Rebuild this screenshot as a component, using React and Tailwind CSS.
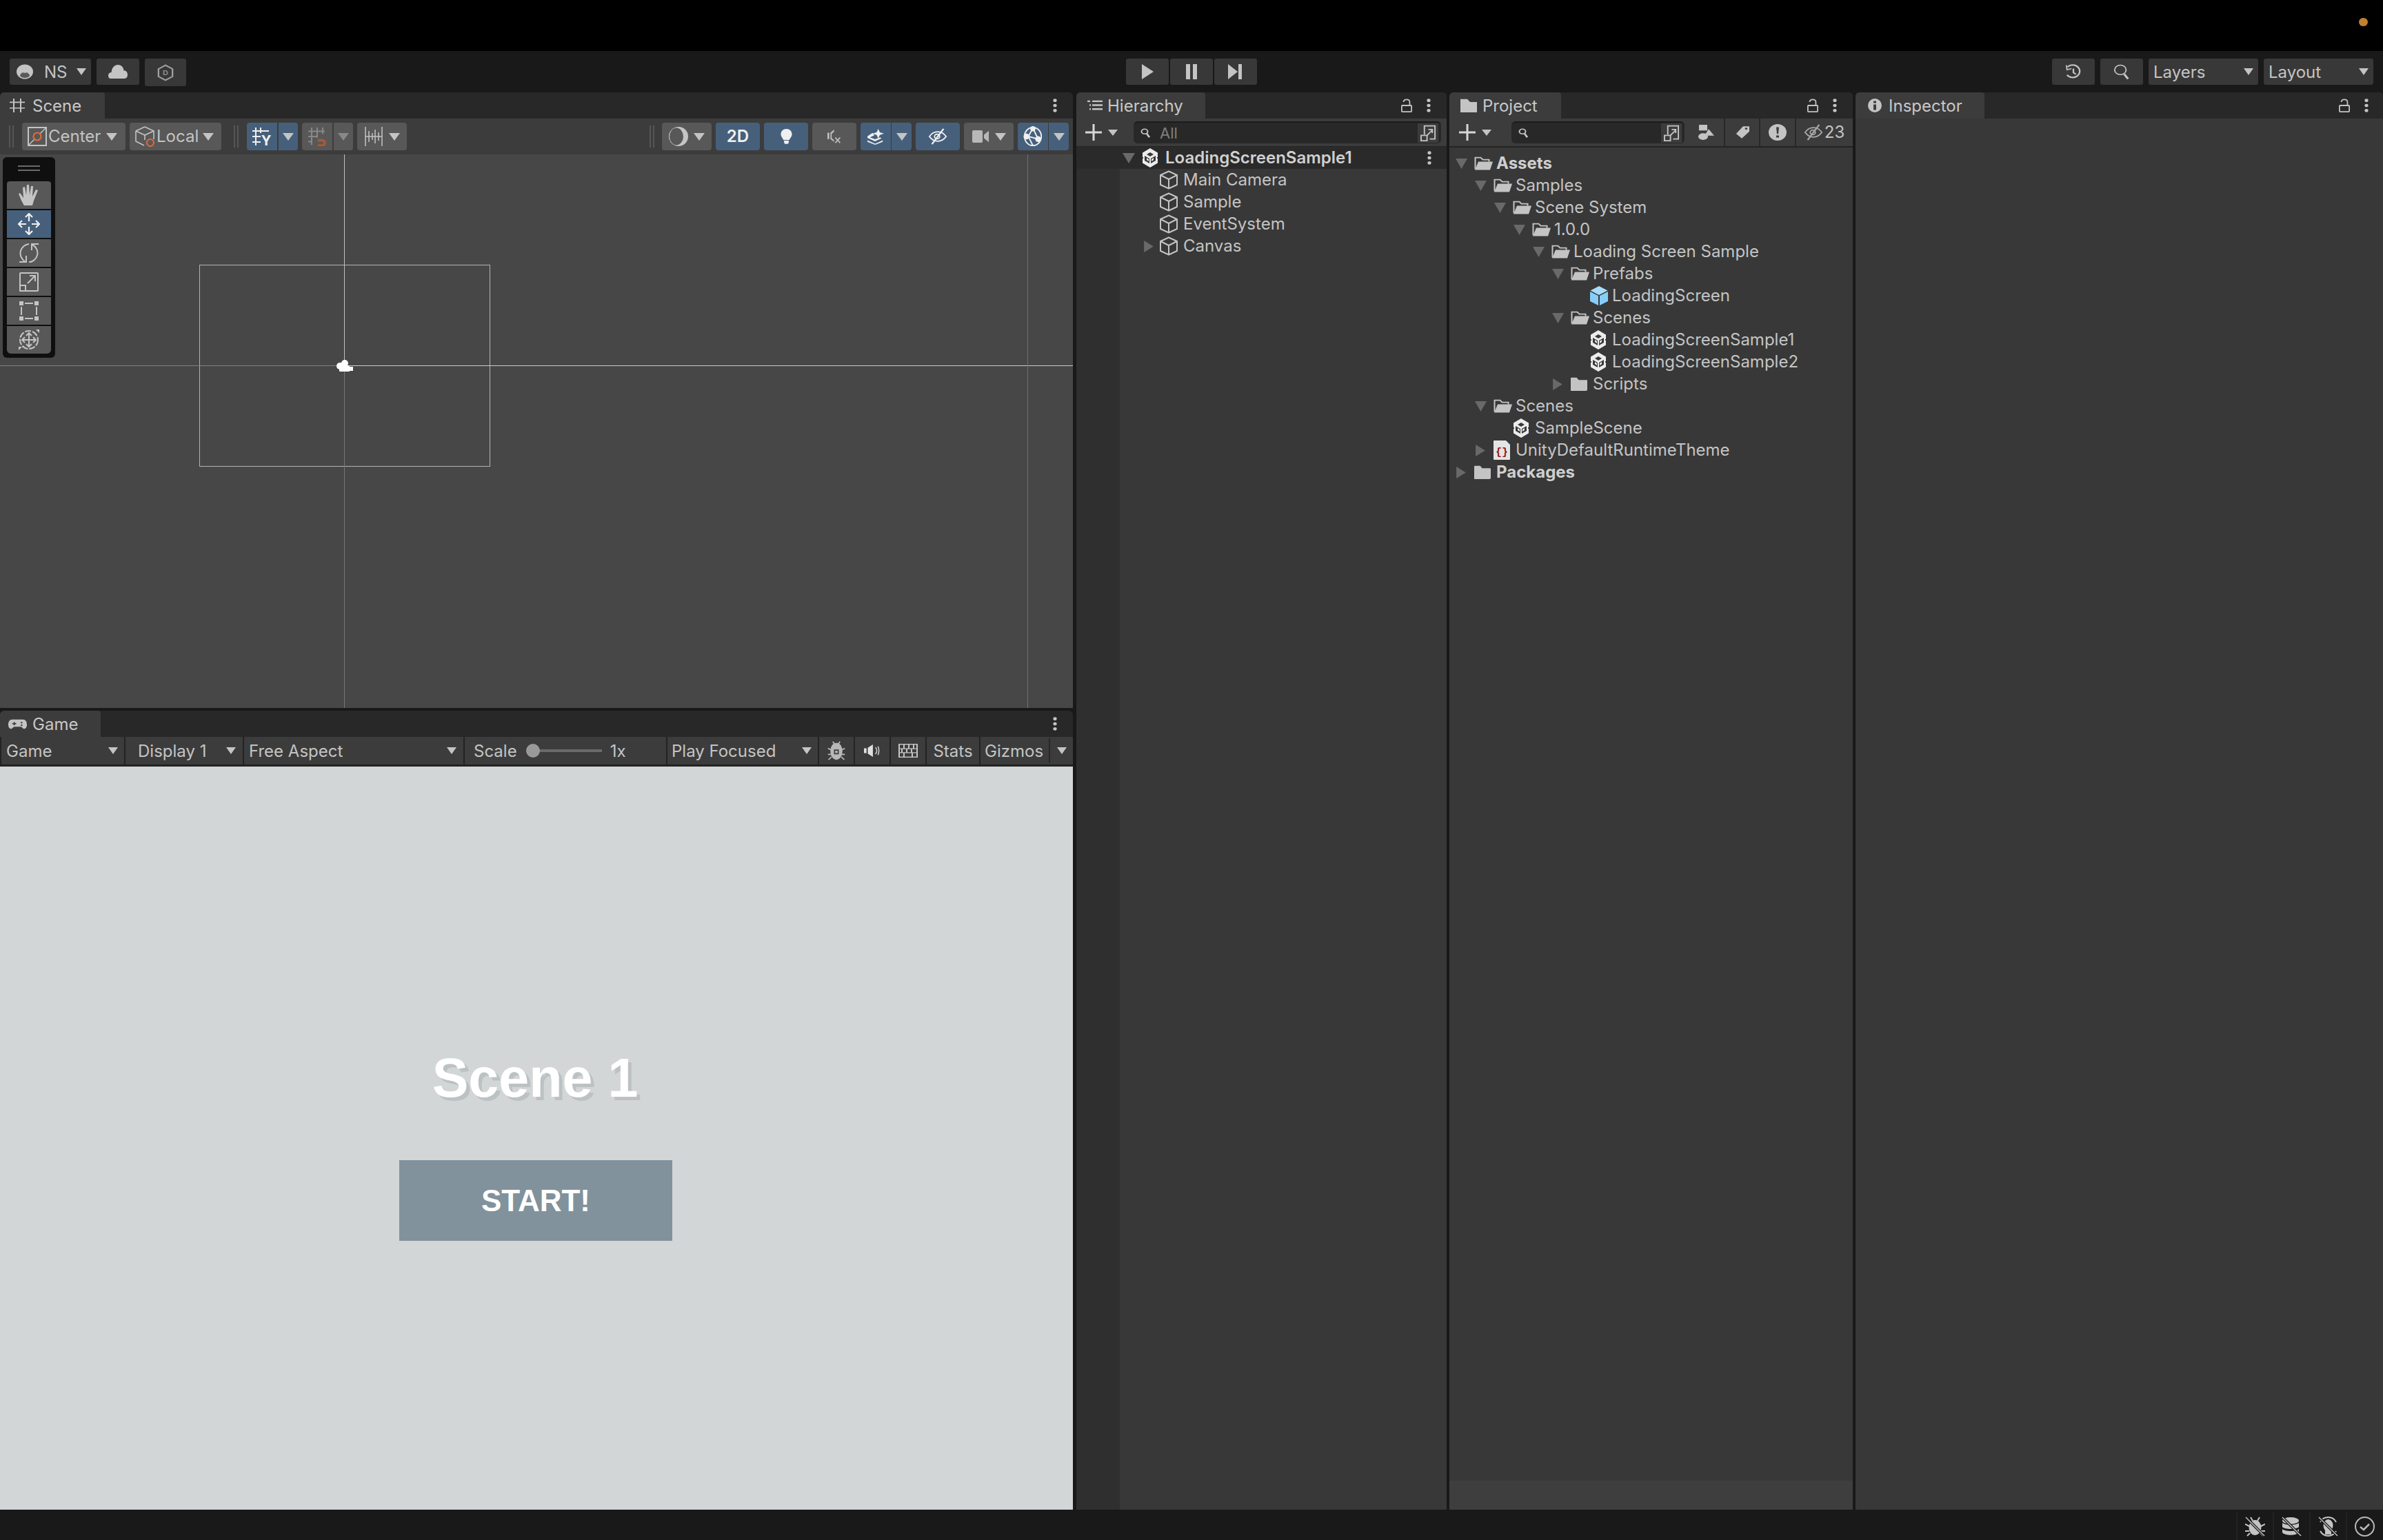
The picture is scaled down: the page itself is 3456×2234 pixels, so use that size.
import React from 'react'

// Shared colours: icons #c4c4c4, tool buttons #585858, active blue #46607c
const FONT = 'font-["Inter",sans-serif]'

// icons are sized to the reference box, so they stretch to fit it
const S = (props) => <svg preserveAspectRatio="none" {...props} />

const Tri = ({ dir = 'down', c = '#c4c4c4', w = 14, h = 10 }) => (
  <S width={w} height={h} viewBox="0 0 14 12" className="shrink-0">
    {dir === 'down' ? <path d="M0 0h14L7 12z" fill={c} /> : <path d="M1 0l12 6-12 6z" fill={c} />}
  </S>
)

const Dots = () => (
  <S width="8" height="20" viewBox="0 0 8 22">
    <circle cx="4" cy="3" r="2.6" fill="#c4c4c4" /><circle cx="4" cy="11" r="2.6" fill="#c4c4c4" /><circle cx="4" cy="19" r="2.6" fill="#c4c4c4" />
  </S>
)

const Lock = () => (
  <S width="16" height="20" viewBox="0 0 18 22" fill="none" stroke="#c4c4c4" strokeWidth="2">
    <rect x="1" y="11" width="16" height="10" rx="1" /><path d="M14 11V5.500C14 3 12 1.500 9 1.500S4 3 4 5.500" />
  </S>
)

const Cube = () => (
  <S width="26" height="28" viewBox="0 0 26 28" fill="none" stroke="#c4c4c4" strokeWidth="2" strokeLinejoin="round">
    <path d="M13 1.500L25 7v14l-12 5.500L1 21V7z" /><path d="M1 7l12 6 12-6M13 13v13.500" />
  </S>
)

const UnityScene = () => (
  <S width="24" height="28" viewBox="0 0 24 28">
    <path d="M12 0l11 6.500v15L12 28 1 21.500v-15z" fill="#ececec" />
    <path d="M12 6l5 3-5 3-5-3z" fill="#383838" />
    <path d="M4 11l7 4v7l-7-4z" fill="#383838" />
    <path d="M20 11l-7 4v7l7-4z" fill="#383838" />
    <path d="M7 14l3 2v3l-3-2zM17 14l-3 2v3l3-2z" fill="#ececec" />
    <path d="M0 14h2M22 14h2" stroke="#383838" strokeWidth="2" />
  </S>
)

const Prefab = () => (
  <S width="26" height="28" viewBox="0 0 26 28">
    <path d="M13 0l12.500 6.500L13 13 .5 6.500z" fill="#a7dcfb" />
    <path d="M0 8l12 6v14L0 22z" fill="#86cdf8" />
    <path d="M26 8l-12 6v14l12-6z" fill="#86cdf8" />
  </S>
)

const FolderOpen = () => (
  <S width="27" height="20" viewBox="0 0 27 24">
    <path d="M1.500 22V2h8l3 3.500h9V9" fill="none" stroke="#c4c4c4" strokeWidth="2" />
    <path d="M6 9h21l-4 14.500H1z" fill="#c4c4c4" />
  </S>
)

const FolderClosed = () => (
  <S width="24" height="20" viewBox="0 0 25 24">
    <path d="M0 2a1 1 0 011-1h8l3 4h12a1 1 0 011 1v16a2 2 0 01-2 2H1a1 1 0 01-1-1z" fill="#c4c4c4" />
  </S>
)

const UssFile = () => (
  <svg width="24" height="28" viewBox="0 0 24 28">
    <path d="M1 0h17l6 6v21a1 1 0 01-1 1H1a1 1 0 01-1-1V1a1 1 0 011-1z" fill="#e4e4e4" />
    <text x="12" y="21" textAnchor="middle" fontFamily="Liberation Mono" fontWeight="700" fontSize="15" fill="#8f1410">{'{}'}</text>
  </svg>
)

const Magnifier = ({ c = '#c4c4c4' }) => (
  <S width="14" height="14" viewBox="0 0 14 18" fill="none" stroke={c}>
    <circle cx="6" cy="6" r="4.500" strokeWidth="2" /><path d="M9 10l4 7" strokeWidth="3" />
  </S>
)

const SearchBySelection = () => (
  <S width="23" height="24" viewBox="0 0 24 28" fill="none" stroke="#c4c4c4" strokeWidth="2">
    <path d="M6 17V2h16v22H14" /><rect x="1" y="18" width="9" height="9" /><path d="M10 18l8-9M12 8h6v6" />
  </S>
)

const EyeOff = ({ c = '#c4c4c4', w = 28, h = 24 }) => (
  <S width={w} height={h} viewBox="0 0 30 28" fill="none" stroke={c} strokeWidth="2">
    <path d="M2 14C6 8 10 6 15 6s9 2 13 8c-4 6-8 8-13 8S6 20 2 14z" /><circle cx="14" cy="14" r="4" /><path d="M24 1L6 27" strokeWidth="2.500" />
  </S>
)

const Btn = ({ w, cls = '', children }) => (
  <div className={`h-[40px] flex items-center justify-center shrink-0 ${cls}`} style={{ width: w }}>{children}</div>
)

const LabelBtn = ({ w, cls = '', children }) => (
  <div className={`h-[40px] flex items-center shrink-0 rounded-[4px] bg-[#585858] pl-[8px] ${cls}`} style={{ width: w }}>{children}</div>
)

const TopBtn = ({ w, cls = '', children }) => (
  <div className={`h-[38px] rounded-[3px] bg-[#383838] flex items-center shrink-0 ${cls}`} style={{ width: w }}>{children}</div>
)

const Grip = () => (
  <div className="flex gap-[3px] h-[32px] shrink-0">
    <div className="w-[2px] bg-[#565656]" /><div className="w-[2px] bg-[#565656]" />
  </div>
)

const Tab = ({ w, icon, label }) => (
  <div className="h-[38px] bg-[#3c3c3c] rounded-t-[4px] flex items-center shrink-0 text-[#c8c8c8]" style={{ width: w }}>{icon}<span className="pt-[2px]">{label}</span></div>
)

const GREY = 'bg-[#585858]'
const BLUE = 'bg-[#46607c]'

function TopBar() {
  return (
    <div className="h-[60px] bg-[#191919] grid grid-cols-[1fr_auto_1fr] items-center px-[14px] text-[#c4c4c4]">
      <div className="flex gap-[8px] items-center">
        <TopBtn w={118} cls="pl-[10px]">
          <S width="24" height="22" viewBox="0 0 25 26">
            <circle cx="12.500" cy="13" r="12.500" fill="#c4c4c4" /><path d="M5 20c1-4 4-6 7.500-6s6.500 2 7.500 6c-2 2.500-4.500 3.500-7.500 3.500S7 22.500 5 20z" fill="#5a5a5a" /><circle cx="12.500" cy="10" r="5" fill="#c4c4c4" />
          </S>
          <span className="ml-[16px] pt-[1px]">NS</span>
          <div className="ml-auto mr-[7px]"><Tri /></div>
        </TopBtn>
        <TopBtn w={62} cls="justify-center">
          <S width="28" height="20" viewBox="0 0 30 22"><path d="M4 22c-3 0-4-2-4-5 0-3 2-5 5-5 0-6 4-12 10-12s9 5 9 9c4 0 6 3 6 7 0 4-2 6-5 6z" fill="#c4c4c4" /></S>
        </TopBtn>
        <TopBtn w={60} cls="justify-center h-[40px] mt-[2px]">
          <S width="24" height="25" viewBox="0 0 26 32" fill="none" stroke="#a0a0a0" strokeWidth="2.500">
            <path d="M13 2l11 7v14l-11 7-11-7V9z" />
            <text x="13" y="21" textAnchor="middle" fontSize="12" fontWeight="700" fontFamily="Inter" fill="#8a8a8a" stroke="none">D</text>
          </S>
        </TopBtn>
      </div>
      <div className="flex gap-[2px]">
        <TopBtn w={62} cls="justify-center"><svg width="20" height="22" viewBox="0 0 20 22"><path d="M2 0l17 11L2 22z" fill="#c4c4c4" /></svg></TopBtn>
        <TopBtn w={62} cls="justify-center"><svg width="20" height="22" viewBox="0 0 20 22"><path d="M2 0h6v22H2zM12 0h6v22h-6z" fill="#c4c4c4" /></svg></TopBtn>
        <TopBtn w={62} cls="justify-center"><svg width="22" height="22" viewBox="0 0 22 22"><path d="M0 0l14 11L0 22zM15 0h5v22h-5z" fill="#c4c4c4" /></svg></TopBtn>
      </div>
      <div className="flex gap-[8px] justify-end items-center">
        <TopBtn w={62} cls="justify-center">
          <S width="24" height="23" viewBox="0 0 26 28" fill="none" stroke="#c4c4c4" strokeWidth="2.500">
            <path d="M4 5a11 11 0 11-1 14" /><path d="M2 2l1 8 7-2" strokeWidth="2" /><path d="M13 8v7l4 3" />
          </S>
        </TopBtn>
        <TopBtn w={62} cls="justify-center">
          <S width="24" height="23" viewBox="0 0 26 30" fill="none" stroke="#c4c4c4">
            <circle cx="11" cy="11" r="9" strokeWidth="2" /><path d="M17 19l6 9" strokeWidth="3.500" />
          </S>
        </TopBtn>
        <TopBtn w={159} cls="pl-[7px] pr-[7px] justify-between"><span className="pt-[1px]">Layers</span><Tri /></TopBtn>
        <TopBtn w={159} cls="pl-[7px] pr-[7px] justify-between"><span className="pt-[1px]">Layout</span><Tri /></TopBtn>
      </div>
    </div>
  )
}

function SceneToolbar() {
  return (
    <div className="h-[52px] bg-[#3c3c3c] flex items-center justify-between pl-[13px] pr-[6px] text-[#c4c4c4] shrink-0">
      <div className="flex items-center">
        <Grip />
        <LabelBtn w={150} cls="ml-[12px] pr-[12px]">
          <svg width="28" height="28" viewBox="0 0 28 28" fill="none" className="shrink-0">
            <rect x="1" y="1" width="26" height="26" stroke="#c4c4c4" strokeWidth="2" /><path d="M1 27L27 1" stroke="#c4c4c4" strokeWidth="1.500" /><circle cx="14" cy="14" r="5.500" fill="#585858" stroke="#e0693a" strokeWidth="2.200" />
          </svg>
          <span className="ml-[2px]">Center</span>
          <div className="ml-auto"><Tri w={16} h={11} /></div>
        </LabelBtn>
        <LabelBtn w={133} cls="ml-[6px] pr-[11px]">
          <svg width="30" height="30" viewBox="0 0 30 30" fill="none" className="shrink-0">
            <path d="M14 1l13 6v12M1 7l13-6M1 7v15l12 6M1 7l13 6 13-6M14 13v7" stroke="#c4c4c4" strokeWidth="1.600" /><circle cx="22" cy="24" r="5" fill="#585858" stroke="#e0693a" strokeWidth="2.200" />
          </svg>
          <span className="ml-[1px]">Local</span>
          <div className="ml-auto"><Tri w={16} h={11} /></div>
        </LabelBtn>
        <div className="ml-[18px]"><Grip /></div>
        <Btn w={44} cls={`ml-[12px] rounded-l-[4px] ${BLUE}`}>
          {/* taller box than the glyph so the Y's text box stays inside the svg */}
          <svg width="28" height="36" viewBox="0 0 28 36" fill="none" stroke="#f0f0f0" strokeWidth="2">
            <g transform="translate(0,4)">
              <path d="M5 1v26M12 1v8M0 6h24M0 14h12M0 22h12" />
              <text x="20" y="27" textAnchor="middle" fontSize="20" fontWeight="700" fontFamily="Inter" fill="#f0f0f0" stroke="none">Y</text>
            </g>
          </svg>
        </Btn>
        <Btn w={28} cls={`ml-[2px] rounded-r-[4px] ${BLUE}`}><Tri w={16} h={11} /></Btn>
        <Btn w={44} cls={`ml-[6px] rounded-l-[4px] ${GREY}`}>
          <S width="28" height="28" viewBox="0 0 28 30" fill="none" stroke="#888" strokeWidth="2">
            <path d="M6 1v27M14 1v16M22 1v10M1 7h24M1 15h14M1 23h6" /><path d="M15 21h6a4 4 0 010 8h-6" stroke="#a65a36" strokeWidth="4" />
          </S>
        </Btn>
        <Btn w={28} cls={`ml-[2px] rounded-r-[4px] ${GREY}`}><Tri w={16} h={11} c="#888" /></Btn>
        <Btn w={72} cls={`ml-[6px] rounded-[4px] ${GREY} gap-[9px]`}>
          <svg width="26" height="28" viewBox="0 0 26 28" stroke="#c4c4c4" strokeWidth="1.500"><path d="M1 0v28M25 0v28M1 14h24M6 6v16M11 9v10M15 4v20M20 8v12" /></svg>
          <Tri w={16} h={11} />
        </Btn>
      </div>
      <div className="flex items-center">
        <Grip />
        <Btn w={72} cls={`ml-[11px] rounded-[4px] ${GREY} gap-[8px]`}>
          <svg width="28" height="28" viewBox="0 0 28 28"><ellipse cx="14" cy="14" rx="14" ry="14" fill="#c4c4c4" /><ellipse cx="11" cy="14" rx="10" ry="12.500" fill="#585858" /></svg>
          <Tri w={16} h={11} />
        </Btn>
        <Btn w={64} cls={`ml-[6px] rounded-[4px] ${BLUE} font-semibold text-[#f0f0f0]`}><span>2D</span></Btn>
        <Btn w={64} cls={`ml-[6px] rounded-[4px] ${BLUE}`}>
          <S width="17" height="22" viewBox="0 0 18 26"><path d="M9 0c5 0 8.500 4 8.500 9 0 5-3 7-4 10h-9c-1-3-4-5-4-10C.5 4 4 0 9 0zM5 20h8l-1 5c-1 1-5 1-6 0z" fill="#f0f0f0" /></S>
        </Btn>
        <Btn w={64} cls={`ml-[6px] rounded-[4px] ${GREY}`}>
          <S width="21" height="20" viewBox="0 0 24 26" fill="#c0c0c0"><path d="M0 6h3v12H0zM5 6l6-6v4L7 8v8l4 4v3L5 18z" /><path d="M13 15l8 10M21 15l-8 10" stroke="#c0c0c0" strokeWidth="2" /></S>
        </Btn>
        <Btn w={44} cls={`ml-[6px] rounded-l-[4px] ${BLUE}`}>
          <S width="24" height="23" viewBox="0 0 26 32" fill="#f0f0f0">
            <path d="M17 0l2.500 7L26 9.500 19.500 12 17 19l-2.500-7L8 9.500 14.500 7z" /><path d="M8 8l3 5-7 4 8 4 8-4 2 2-10 6-12-7v-3z" /><path d="M0 23l12 7 12-7v3l-12 6-12-6z" />
          </S>
        </Btn>
        <Btn w={29} cls={`ml-[1px] rounded-r-[4px] ${BLUE}`}><Tri w={16} h={11} /></Btn>
        <Btn w={64} cls={`ml-[6px] rounded-[4px] ${BLUE}`}><EyeOff c="#f0f0f0" /></Btn>
        <Btn w={72} cls={`ml-[6px] rounded-[4px] ${GREY} gap-[9px]`}>
          <S width="24" height="18" viewBox="0 0 24 22" fill="#b8b8b8"><rect width="15" height="22" rx="2" /><path d="M17 8l7-7v20l-7-7z" /></S>
          <Tri w={16} h={11} />
        </Btn>
        <Btn w={44} cls={`ml-[6px] rounded-l-[4px] ${BLUE}`}>
          <svg width="30" height="30" viewBox="0 0 30 32" fill="none" stroke="#f0f0f0" strokeWidth="2">
            <ellipse cx="15" cy="16" rx="13" ry="14" /><path d="M15 3L8 16l15 4M8 16L15 30M23 20L15 3" /><circle cx="15" cy="4" r="3" fill="#f0f0f0" /><circle cx="5" cy="16" r="3.500" fill="#f0f0f0" /><circle cx="23" cy="20" r="3.500" fill="#f0f0f0" />
          </svg>
        </Btn>
        <Btn w={29} cls={`ml-[1px] rounded-r-[4px] ${BLUE}`}><Tri w={16} h={11} /></Btn>
      </div>
    </div>
  )
}

const Tool = ({ active, cls = '', children }) => (
  <div className={`w-[64px] h-[40px] flex items-center justify-center ${active ? BLUE : GREY} ${cls}`}>{children}</div>
)

function ToolPalette() {
  return (
    <div className="absolute left-[4px] top-[4px] w-[76px] h-[291px] bg-[#0f0f0f] rounded-[6px] flex flex-col items-center pt-[12px]">
      <div className="w-[32px] flex flex-col gap-[4px] h-[23px]">
        <div className="h-[2px] bg-[#6a6a6a]" /><div className="h-[2px] bg-[#6a6a6a]" />
      </div>
      <div className="flex flex-col gap-[2px]">
        <Tool cls="rounded-t-[4px]">
          <svg width="30" height="32" viewBox="0 0 30 32" fill="#c4c4c4"><path d="M8 31C5 26 3 22 0 14l2-1 5 7-1-15 3-1 2 12 1-15h3l1 15 2-13h3l-1 15 5-10 3 1-6 15-2 7z" /></svg>
        </Tool>
        <Tool active>
          <svg width="32" height="32" viewBox="0 0 32 32" fill="none" stroke="#f0f0f0" strokeWidth="2.200">
            <path d="M16 1v11M16 20v11M1 16h11M20 16h11M11 6l5-5 5 5M11 26l5 5 5-5M6 11l-5 5 5 5M26 11l5 5-5 5" />
          </svg>
        </Tool>
        <Tool>
          <svg width="28" height="28" viewBox="0 0 28 28" fill="none" stroke="#c4c4c4" strokeWidth="2">
            <path d="M14 1A13.500 13.500 0 008 26M19 2A13.500 13.500 0 0114 27.500M28 1H18V10M0 27H10V18" />
          </svg>
        </Tool>
        <Tool>
          <svg width="28" height="28" viewBox="0 0 28 28" fill="none" stroke="#c4c4c4" strokeWidth="2">
            <rect x="1" y="1" width="26" height="26" rx="1" /><rect x="1" y="19" width="8" height="8" /><path d="M12 16L23 5M15 5h8v8" />
          </svg>
        </Tool>
        <Tool>
          <svg width="28" height="28" viewBox="0 0 28 28" fill="#c4c4c4">
            <rect width="6" height="6" /><rect x="22" width="6" height="6" /><rect y="22" width="6" height="6" /><rect x="22" y="22" width="6" height="6" />
            <path d="M8 2h12v2H8zM8 24h12v2H8zM2 8h2v12H2zM24 8h2v12h-2z" />
          </svg>
        </Tool>
        <Tool cls="rounded-b-[6px]">
          <svg width="32" height="32" viewBox="0 0 32 32" fill="none" stroke="#c4c4c4" strokeWidth="2">
            <circle cx="16" cy="16" r="13" strokeDasharray="9 2" /><path d="M16 6v20M6 16h20M12 10l4-4 4 4M12 22l4 4 4-4M10 12l-4 4 4 4M22 12l4 4-4 4" />
            <path d="M26 1h5v5zM1 31v-5h5z" fill="#c4c4c4" stroke="none" />
          </svg>
        </Tool>
      </div>
    </div>
  )
}

function SceneView() {
  return (
    <div className="relative h-[803px] bg-[#474747] overflow-hidden shrink-0">
      {/* grid guides, offsets are relative to the view at y=224 */}
      <div className="absolute left-[289px] top-[160px] w-[422px] h-[293px] border border-[#b4b4b4]" />
      <div className="absolute left-[499px] top-0 w-[1px] h-[302px] bg-[#c0c0c0]" />
      <div className="absolute left-[499px] top-[306px] w-[1px] h-[497px] bg-[#767676]" />
      <div className="absolute left-0 top-[306px] w-[490px] h-[1px] bg-[#808080]" />
      <div className="absolute left-[505px] top-[306px] w-[1051px] h-[1px] bg-[#cccccc]" />
      <div className="absolute left-[1490px] top-0 w-[1px] h-[803px] bg-[#707070]" />
      <svg className="absolute left-[488px] top-[298px]" width="24" height="17" viewBox="0 0 24 17" fill="#fff">
        <circle cx="5" cy="9" r="5" /><circle cx="12" cy="5" r="5" /><rect x="4" y="8" width="15" height="9" rx="1" /><path d="M19 10h5v6h-5z" />
      </svg>
      <ToolPalette />
    </div>
  )
}

const Seg = ({ w, cls = '', children }) => (
  <div className={`h-[40px] bg-[#3c3c3c] flex items-center shrink-0 ${cls}`} style={{ width: w }}>{children}</div>
)

const SegText = ({ cls = '', children }) => <span className={`pt-[2px] ${cls}`}>{children}</span>

function GameToolbar() {
  return (
    <div className="h-[43px] bg-[#232323] flex items-start gap-[2px] pl-[2px] text-[#c4c4c4] shrink-0 overflow-hidden">
      <Seg w={178} cls="pl-[7px] pr-[9px] justify-between"><SegText>Game</SegText><Tri /></Seg>
      <Seg w={170} cls="pl-[18px] pr-[10px] justify-between"><SegText>Display 1</SegText><Tri /></Seg>
      <Seg w={318} cls="pl-[7px] pr-[10px] justify-between"><SegText>Free Aspect</SegText><Tri /></Seg>
      <Seg w={292} cls="pl-[13px]">
        <SegText>Scale</SegText>
        <div className="ml-[13px] w-[110px] h-[20px] relative flex items-center">
          <div className="w-full h-[4px] bg-[#6a6a6a]" />
          <div className="absolute left-0 w-[20px] h-[20px] rounded-full bg-[#999999]" />
        </div>
        <SegText cls="ml-[12px]">1x</SegText>
      </Seg>
      <Seg w={218} cls="pl-[6px] pr-[9px] justify-between"><SegText>Play Focused</SegText><Tri /></Seg>
      <Seg w={50} cls="justify-center">
        <svg width="28" height="28" viewBox="0 0 30 32" fill="none" stroke="#b8b8b8" strokeWidth="2">
          <path d="M15 4c6 0 9 6 9 13s-4 13-9 13S6 24 6 17 9 4 15 4z" fill="#b8b8b8" /><rect x="11" y="14" width="8" height="8" fill="#3c3c3c" stroke="none" /><rect x="13" y="16" width="4" height="4" fill="#b8b8b8" stroke="none" /><path d="M9 1l3 4M21 1l-3 4M1 12l6 3M29 12l-6 3M1 22h5M29 22h-5M2 31l5-5M28 31l-5-5" />
        </svg>
      </Seg>
      <Seg w={50} cls="justify-center">
        <S width="24" height="18" viewBox="0 0 26 26" fill="#e0e0e0"><path d="M0 8h4v10H0zM6 7l8-7v26l-8-7z" /><path d="M18 6c3 4 3 10 0 14M22 4c2 5 2 13 0 18" stroke="#e0e0e0" strokeWidth="1.500" fill="none" /></S>
      </Seg>
      <Seg w={50} cls="justify-center">
        <S width="28" height="20" viewBox="0 0 28 28" fill="none" stroke="#c4c4c4" strokeWidth="2"><rect x="1" y="1" width="26" height="26" /><path d="M1 10h26M1 18h26M8 1v9M15 1v9M22 1v9M5 10v8M12 10v8M19 10v8M8 18v9M20 18v9" /></S>
      </Seg>
      <Seg w={76} cls="justify-center"><SegText>Stats</SegText></Seg>
      <Seg w={135} cls="pl-[6px] pr-[10px]">
        <SegText>Gizmos</SegText><div className="ml-auto w-[2px] h-[36px] bg-[#282828] mr-[10px]" /><Tri />
      </Seg>
    </div>
  )
}

function GameView() {
  return (
    <div className="flex-1 bg-[#d2d6d7] flex flex-col items-center font-['Liberation_Sans',sans-serif] font-bold text-white">
      <div className="ml-[-4px] mt-[405px] h-[92px] flex items-center text-[79px] leading-none [text-shadow:5px_5px_0_#bcc2c3]">Scene 1</div>
      <div className="ml-[-2px] mt-[74px] w-[396px] h-[117px] bg-[#81929c] flex items-center justify-center text-[44px] leading-none">START!</div>
    </div>
  )
}

const hierarchy = [
  { name: 'Main Camera', d: 0 },
  { name: 'Sample', d: 0 },
  { name: 'EventSystem', d: 0 },
  { name: 'Canvas', d: 0, arrow: true },
]

const project = [
  { name: 'Assets', d: 0, open: true, bold: true, icon: 'open' },
  { name: 'Samples', d: 1, open: true, icon: 'open' },
  { name: 'Scene System', d: 2, open: true, icon: 'open' },
  { name: '1.0.0', d: 3, open: true, icon: 'open' },
  { name: 'Loading Screen Sample', d: 4, open: true, icon: 'open' },
  { name: 'Prefabs', d: 5, open: true, icon: 'open' },
  { name: 'LoadingScreen', d: 6, icon: 'prefab' },
  { name: 'Scenes', d: 5, open: true, icon: 'open' },
  { name: 'LoadingScreenSample1', d: 6, icon: 'scene' },
  { name: 'LoadingScreenSample2', d: 6, icon: 'scene' },
  { name: 'Scripts', d: 5, closed: true, icon: 'closed' },
  { name: 'Scenes', d: 1, open: true, icon: 'open' },
  { name: 'SampleScene', d: 2, icon: 'scene' },
  { name: 'UnityDefaultRuntimeTheme', d: 1, closed: true, icon: 'uss' },
  { name: 'Packages', d: 0, closed: true, bold: true, icon: 'closed' },
]

const treeIcons = {
  open: <FolderOpen />,
  closed: <FolderClosed />,
  prefab: <Prefab />,
  scene: <UnityScene />,
  uss: <UssFile />,
}

function ProjectRow({ row }) {
  return (
    <div className="h-[32px] flex items-center" style={{ paddingLeft: 9 + 28 * row.d }}>
      <div className="w-[27px] shrink-0 flex">
        {row.open && <Tri w={17} h={15} c="#696969" />}
        {row.closed && <Tri dir="right" w={16} h={17} c="#696969" />}
      </div>
      <div className="w-[32px] shrink-0 flex">{treeIcons[row.icon]}</div>
      <span className={row.bold ? 'font-bold text-[#cfcfcf]' : 'text-[#c4c4c4]'}>{row.name}</span>
    </div>
  )
}

const FilterBtn = ({ w, cls = '', children }) => (
  <div className={`h-[40px] bg-[#3c3c3c] flex items-center justify-center shrink-0 ${cls}`} style={{ width: w }}>{children}</div>
)

const PlusMenu = () => (
  <div className="flex items-center gap-[9px] shrink-0">
    <svg width="24" height="24" viewBox="0 0 24 24" fill="#d8d8d8"><path d="M10.500 0h3v10.500H24v3H13.500V24h-3V13.500H0v-3h10.500z" /></svg>
    <Tri h={9} />
  </div>
)

function HierarchyPanel() {
  return (
    <div className="w-[537px] shrink-0 flex flex-col bg-[#383838] rounded-t-[6px] overflow-hidden text-[#c4c4c4]">
      <div className="h-[38px] bg-[#282828] flex items-center shrink-0 pr-[22px]">
        <Tab w={187} label="Hierarchy" icon={
          <S className="ml-[16px] mr-[7px]" width="22" height="18" viewBox="0 0 22 22" fill="#c4c4c4">
            <path d="M0 2h4v3H0zM7 2h15v3H7zM7 9h15v3H7zM7 16h15v3H7zM3 9h2v3H3zM3 16h2v3H3z" />
          </S>
        } />
        <div className="ml-auto flex items-center gap-[20px]"><Lock /><Dots /></div>
      </div>
      <div className="h-[40px] bg-[#3c3c3c] flex items-center pl-[13px] pr-[8px] shrink-0">
        <PlusMenu />
        <div className="ml-[23px] flex-1 h-[32px] rounded-[6px] bg-[#282828] border-t-2 border-[#1c1c1c] flex items-center pl-[10px] pr-[4px]">
          <Magnifier />
          <span className="ml-[14px] text-[#7e7e7e] text-[22px]">All</span>
          <div className="ml-auto bg-[#3c3c3c] w-[30px] h-[28px] flex items-center justify-center"><SearchBySelection /></div>
        </div>
      </div>
      <div className="h-[1px] bg-[#232323] shrink-0" />
      <div className="h-[32px] bg-[#2a2a2a] flex items-center pl-[67px] pr-[21px] shrink-0">
        <div className="w-[28px] flex"><Tri w={18} h={15} c="#696969" /></div>
        <div className="w-[34px] flex"><UnityScene /></div>
        <span className="font-semibold text-[#d0d0d0]">LoadingScreenSample1</span>
        <div className="ml-auto flex"><Dots /></div>
      </div>
      <div className="flex-1 flex">
        <div className="w-[63px] bg-[#2f2f2f] shrink-0" />
        <div className="flex-1">
          {hierarchy.map((row) => (
            <div key={row.name} className="h-[32px] flex items-center pl-[34px]">
              <div className="w-[24px] shrink-0 flex">{row.arrow && <Tri dir="right" w={16} h={17} c="#696969" />}</div>
              <div className="w-[34px] shrink-0 flex"><Cube /></div>
              <span>{row.name}</span>
            </div>
          ))}
        </div>
      </div>
    </div>
  )
}

function ProjectPanel() {
  return (
    <div className="w-[585px] shrink-0 flex flex-col bg-[#383838] rounded-t-[6px] overflow-hidden text-[#c4c4c4]">
      <div className="h-[38px] bg-[#282828] flex items-center shrink-0 pr-[22px]">
        <Tab w={162} label="Project" icon={
          <S className="ml-[16px] mr-[8px]" width="24" height="20" viewBox="0 0 24 24" fill="#c4c4c4"><path d="M0 1h10l4 5h10v18H0z" /></S>
        } />
        <div className="ml-auto flex items-center gap-[20px]"><Lock /><Dots /></div>
      </div>
      <div className="h-[40px] bg-[#3c3c3c] flex items-center pl-[14px] shrink-0">
        <PlusMenu />
        <div className="ml-[29px] w-[251px] h-[32px] rounded-[6px] bg-[#282828] border-t-2 border-[#1c1c1c] flex items-center pl-[10px] pr-[4px] shrink-0">
          <Magnifier />
          <div className="ml-auto bg-[#3c3c3c] w-[30px] h-[28px] flex items-center justify-center"><SearchBySelection /></div>
        </div>
        <div className="ml-[5px] flex gap-[2px] bg-[#282828]">
          <FilterBtn w={52}>
            <S width="24" height="26" viewBox="0 0 24 38" fill="#c4c4c4"><rect x="2" y="3" width="12" height="12" /><path d="M16 12l8 14H10z" /><circle cx="8" cy="28" r="7" /></S>
          </FilterBtn>
          <FilterBtn w={49}>
            <S width="20" height="20" viewBox="0 0 22 30" fill="#c4c4c4"><path d="M12 2h10v11L10 28 1 18z" /><circle cx="17" cy="7" r="2" fill="#3c3c3c" /></S>
          </FilterBtn>
          <FilterBtn w={50}>
            <S width="26" height="24" viewBox="0 0 26 32"><ellipse cx="13" cy="16" rx="13" ry="16" fill="#c4c4c4" /><path d="M11 6h4l-1 13h-2zM11 22h4v4h-4z" fill="#3c3c3c" /></S>
          </FilterBtn>
          <FilterBtn w={81} cls="gap-[2px]"><EyeOff c="#a8a8a8" w={28} h={24} /><span>23</span></FilterBtn>
        </div>
      </div>
      <div className="h-[2px] bg-[#232323] shrink-0" />
      <div className="flex-1 pt-[7px]">
        {project.map((row, i) => <ProjectRow key={i} row={row} />)}
      </div>
      <div className="h-[42px] bg-[#3e3e3e] shrink-0" />
    </div>
  )
}

function InspectorPanel() {
  return (
    <div className="flex-1 flex flex-col bg-[#383838] rounded-t-[6px] overflow-hidden text-[#c4c4c4]">
      <div className="h-[38px] bg-[#282828] flex items-center shrink-0 pr-[20px]">
        <Tab w={187} label="Inspector" icon={
          <S className="ml-[18px] mr-[10px]" width="20" height="20" viewBox="0 0 20 28">
            <ellipse cx="10" cy="14" rx="10" ry="14" fill="#c4c4c4" /><path d="M8 5h4v4H8zM8 12h4v11H8z" fill="#3c3c3c" />
          </S>
        } />
        <div className="ml-auto flex items-center gap-[20px]"><Lock /><Dots /></div>
      </div>
      <div className="flex-1" />
    </div>
  )
}

const StatusIcon = ({ children }) => (
  <div className="w-[53px] h-[40px] border-l-2 border-[#222222] flex items-center justify-center shrink-0">{children}</div>
)

const Strike = () => <path d="M1 1l27 27" stroke="#191919" strokeWidth="4" />
const StrikeLine = () => <path d="M1 1l27 27" stroke="#c4c4c4" strokeWidth="1.500" />

function StatusBar() {
  return (
    <div className="h-[44px] bg-[#191919] flex items-end justify-end pr-[1px] shrink-0">
      <StatusIcon>
        <svg width="29" height="29" viewBox="0 0 29 29" fill="#c4c4c4"><ellipse cx="14.500" cy="16" rx="9" ry="11" /><path d="M8 1l3 5M21 1l-3 5M0 11l6 3M29 11l-6 3M0 21h6M29 21h-6M3 28l4-4M26 28l-4-4" stroke="#c4c4c4" strokeWidth="2" /><Strike /><StrikeLine /></svg>
      </StatusIcon>
      <StatusIcon>
        <svg width="29" height="29" viewBox="0 0 29 29" fill="#c4c4c4"><ellipse cx="13" cy="6" rx="12" ry="5" /><path d="M1 9c3 4 21 4 24 0v6c-3 4-21 4-24 0zM1 18c3 4 21 4 24 0v5c-3 5-21 5-24 0z" /><Strike /><StrikeLine /></svg>
      </StatusIcon>
      <StatusIcon>
        <svg width="29" height="29" viewBox="0 0 29 29" fill="none" stroke="#c4c4c4" strokeWidth="2"><path d="M3 8A13 13 0 0126 8M3 21a13 13 0 0023 0" /><ellipse cx="14.500" cy="13" rx="6" ry="8" fill="#c4c4c4" /><rect x="11" y="20" width="7" height="5" fill="#c4c4c4" /><Strike /><StrikeLine /></svg>
      </StatusIcon>
      <StatusIcon>
        <svg width="29" height="29" viewBox="0 0 29 29" fill="none" stroke="#b8b8b8" strokeWidth="2"><circle cx="14.500" cy="14.500" r="13.500" /><path d="M8 15l5 4 8-8" strokeWidth="2.500" /></svg>
      </StatusIcon>
    </div>
  )
}

export default function App() {
  return (
    <div className={`w-[3456px] h-[2234px] bg-[#191919] flex flex-col overflow-hidden text-[24px] leading-none ${FONT}`}>
      <div className="h-[74px] bg-black shrink-0 flex justify-end pr-[22px] pt-[26px]">
        <div className="w-[13px] h-[12px] rounded-full bg-[#c08030]" />
      </div>
      <TopBar />
      <div className="flex-1 flex min-h-0">
        <div className="w-[1556px] shrink-0 flex flex-col gap-[4px]">
          <div className="flex flex-col shrink-0 rounded-t-[6px] overflow-hidden">
            <div className="h-[38px] bg-[#282828] flex items-center justify-between pr-[22px]">
              <Tab w={152} label="Scene" icon={
                <S className="ml-[14px] mr-[11px]" width="22" height="20" viewBox="0 0 22 26" stroke="#c4c4c4" strokeWidth="2"><path d="M6 0v26M16 0v26M0 7h22M0 18h22" /></S>
              } />
              <Dots />
            </div>
            <SceneToolbar />
            <SceneView />
          </div>
          <div className="flex-1 flex flex-col min-h-0 rounded-t-[6px] overflow-hidden">
            <div className="h-[38px] bg-[#282828] flex items-center justify-between pr-[22px] shrink-0">
              <Tab w={146} label="Game" icon={
                <S className="ml-[12px] mr-[8px]" width="27" height="15" viewBox="0 0 28 20">
                  <path d="M6 1h16c4 0 6 4 6 10 0 5-2 8-4 8s-3-3-5-4H9c-2 1-3 4-5 4s-4-3-4-8C0 5 2 1 6 1z" fill="#c4c4c4" /><path d="M6 9h6M9 6v6" stroke="#3c3c3c" strokeWidth="2" /><circle cx="20" cy="7" r="1.500" fill="#3c3c3c" /><circle cx="20" cy="12" r="1.500" fill="#3c3c3c" />
                </S>
              } />
              <Dots />
            </div>
            <GameToolbar />
            <GameView />
          </div>
        </div>
        <div className="w-[5px] shrink-0" />
        <HierarchyPanel />
        <div className="w-[4px] shrink-0" />
        <ProjectPanel />
        <div className="w-[4px] shrink-0" />
        <InspectorPanel />
      </div>
      <StatusBar />
    </div>
  )
}
